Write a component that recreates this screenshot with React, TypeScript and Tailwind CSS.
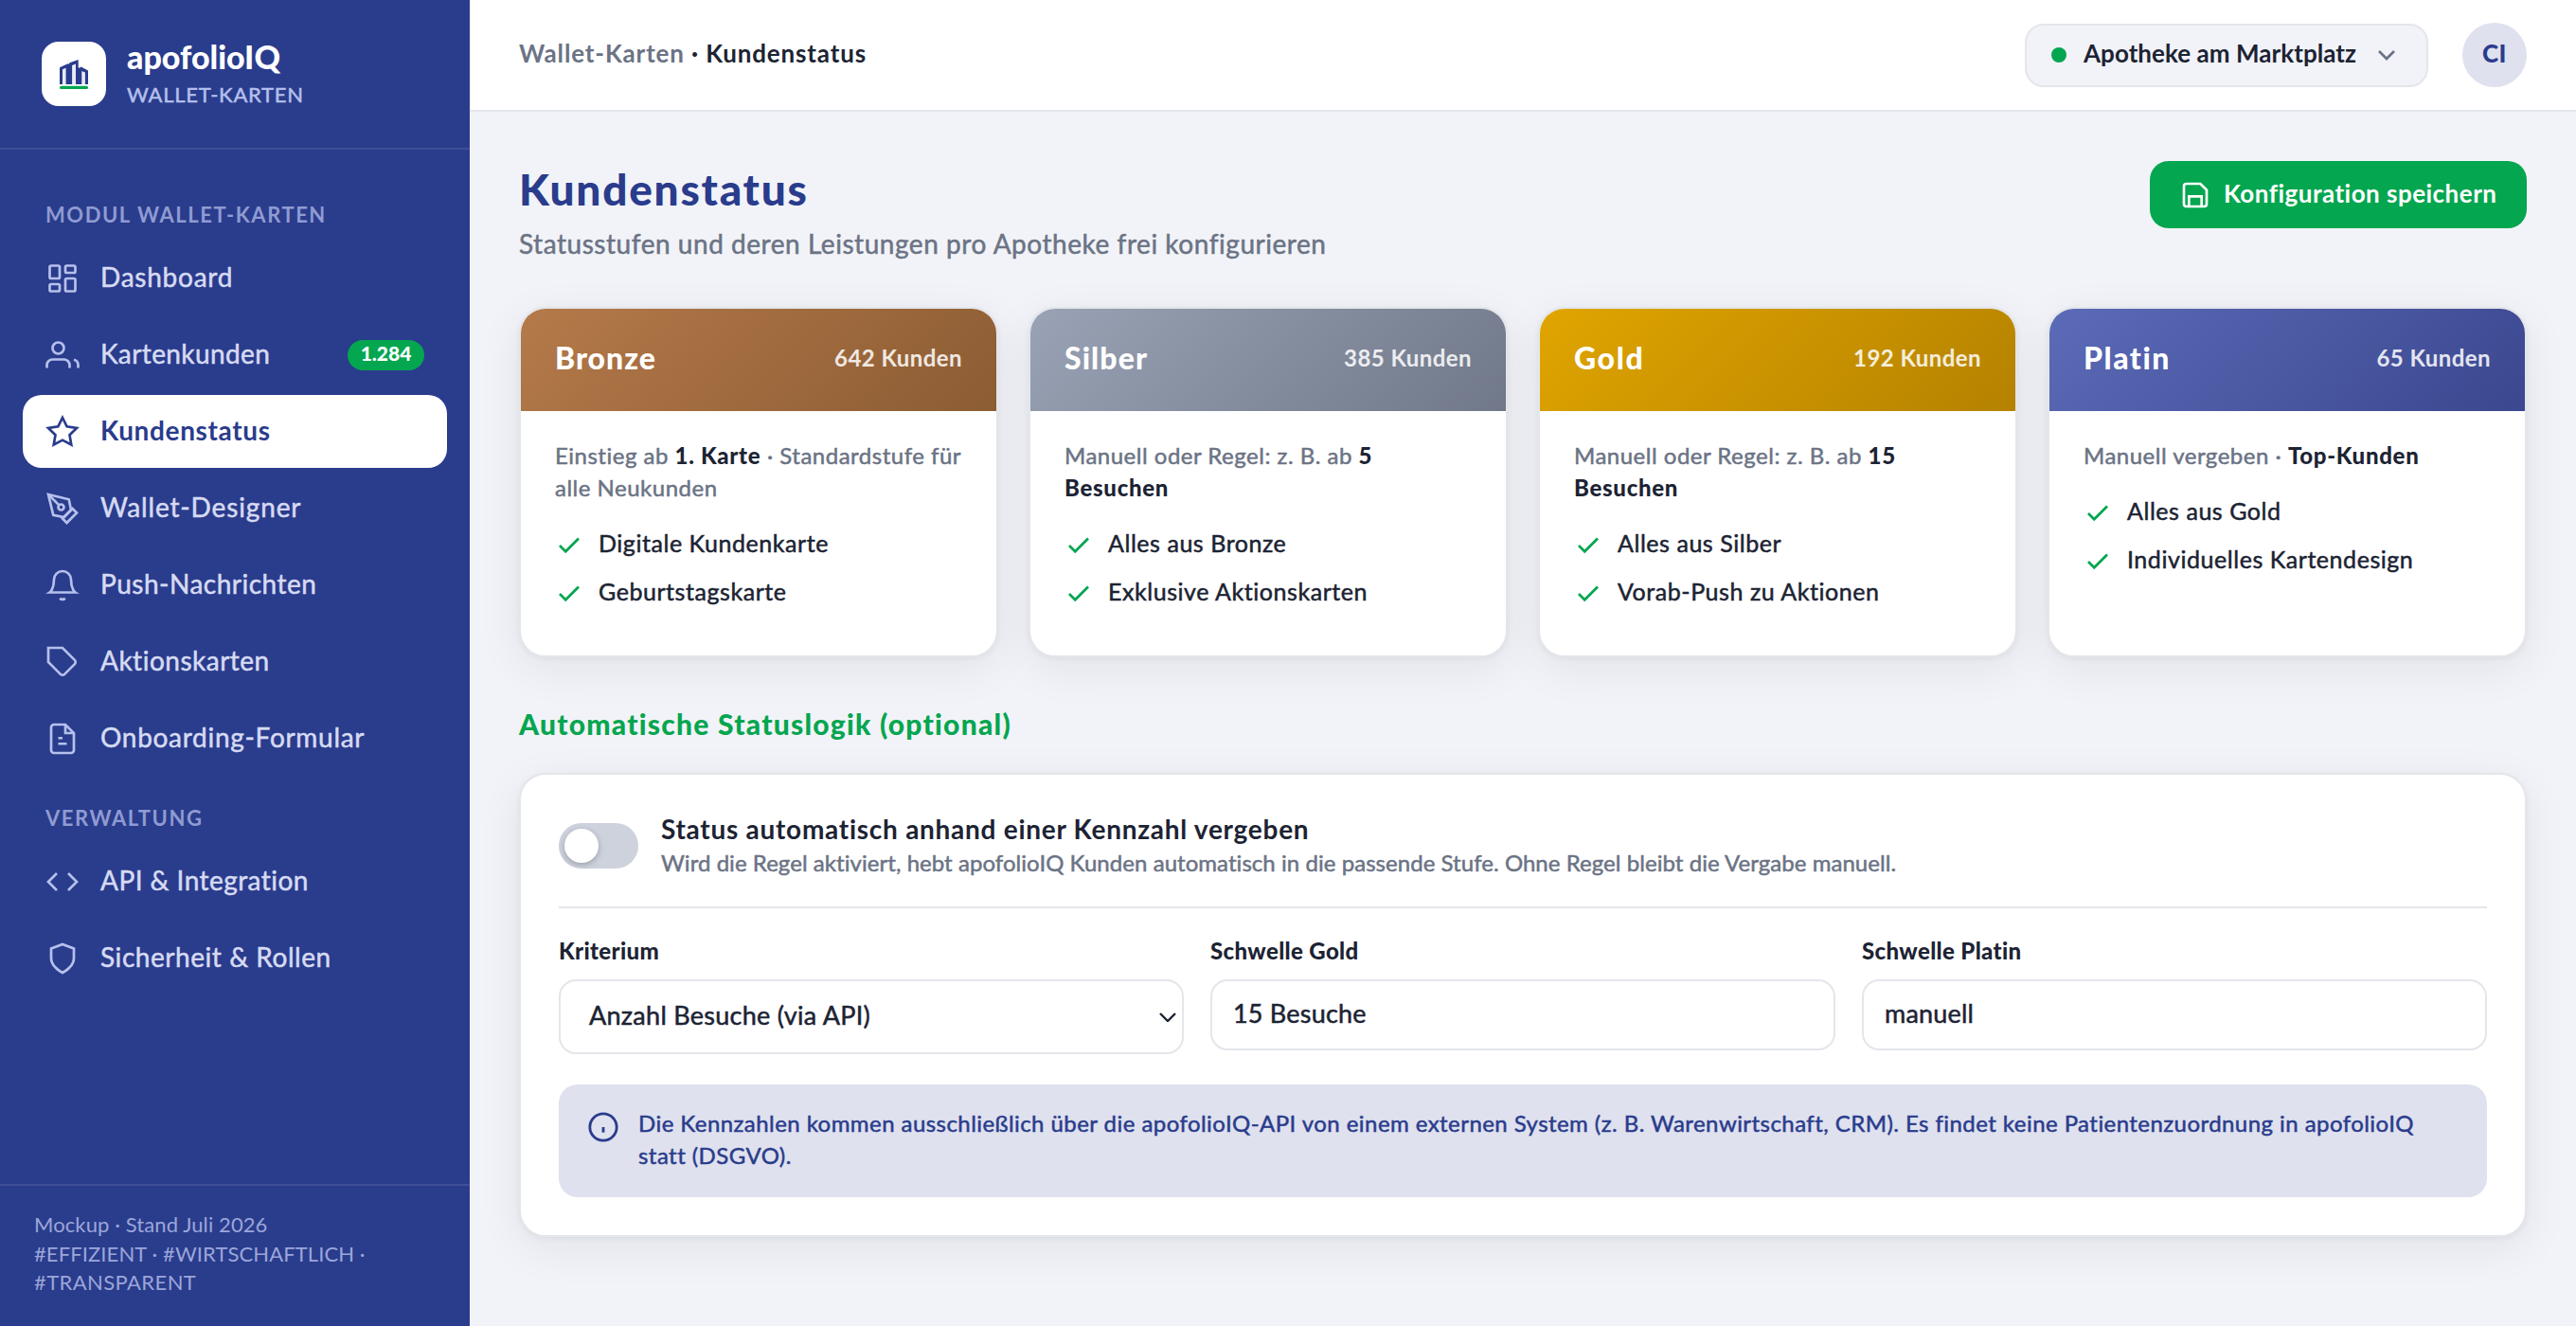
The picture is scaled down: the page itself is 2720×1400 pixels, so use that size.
import type { ReactNode } from "react";
import { clsx } from "clsx";

interface NavItem {
  label: string;
  icon: ReactNode;
  tracking: string;
  badge?: string;
  active?: boolean;
}

interface Tier {
  name: string;
  nameTracking: string;
  count: string;
  gradient: string;
  rule: ReactNode;
  perks: string[];
}

const icons = {
  dashboard: (
    <>
      <rect x="3" y="3" width="7" height="9" rx="1" />
      <rect x="14" y="3" width="7" height="5" rx="1" />
      <rect x="14" y="12" width="7" height="9" rx="1" />
      <rect x="3" y="16" width="7" height="5" rx="1" />
    </>
  ),
  users: (
    <>
      <path d="M17 21v-2a4 4 0 0 0-4-4H5a4 4 0 0 0-4 4v2" />
      <circle cx="9" cy="7" r="4" />
      <path d="M23 21v-2a4 4 0 0 0-3-3.87" />
    </>
  ),
  star: (
    <polygon points="12 2 15.09 8.26 22 9.27 17 14.14 18.18 21.02 12 17.77 5.82 21.02 7 14.14 2 9.27 8.91 8.26" />
  ),
  pen: (
    <>
      <path d="M12 19l7-7 3 3-7 7-3-3z" />
      <path d="M18 13l-1.5-7.5L2 2l3.5 14.5L13 18l5-5z" />
      <path d="M2 2l7.586 7.586" />
      <circle cx="11" cy="11" r="2" />
    </>
  ),
  bell: (
    <>
      <path d="M18 8A6 6 0 0 0 6 8c0 7-3 9-3 9h18s-3-2-3-9" />
      <path d="M13.73 21a2 2 0 0 1-3.46 0" />
    </>
  ),
  tag: (
    <path d="M20.59 13.41l-7.17 7.17a2 2 0 0 1-2.83 0L2 12V2h10l8.59 8.59a2 2 0 0 1 0 2.82z" />
  ),
  file: (
    <>
      <path d="M14 2H6a2 2 0 0 0-2 2v16a2 2 0 0 0 2 2h12a2 2 0 0 0 2-2V8z" />
      <path d="M14 2v6h6M9 11.5h3M9 15.5h6" />
    </>
  ),
  code: <path d="M16 18l6-6-6-6M8 6l-6 6 6 6" />,
  shield: <path d="M12 22s8-4 8-10V5l-8-3-8 3v7c0 6 8 10 8 10z" />,
  save: (
    <>
      <path d="M19 21H5a2 2 0 0 1-2-2V5a2 2 0 0 1 2-2h11l5 5v11a2 2 0 0 1-2 2z" />
      <path d="M17 21v-8H7v8" />
    </>
  ),
  check: <path d="M20 6L9 17l-5-5" />,
  chevron: <path d="M6 9l6 6 6-6" />,
  info: (
    <>
      <circle cx="12" cy="12" r="10" />
      <path d="M12 16v-4" />
    </>
  ),
};

const modulItems: NavItem[] = [
  { label: "Dashboard", icon: icons.dashboard, tracking: "tracking-[0.75px]" },
  {
    label: "Kartenkunden",
    icon: icons.users,
    tracking: "tracking-[0.4px]",
    badge: "1.284",
  },
  {
    label: "Kundenstatus",
    icon: icons.star,
    tracking: "tracking-[0.65px]",
    active: true,
  },
  { label: "Wallet-Designer", icon: icons.pen, tracking: "tracking-[0.85px]" },
  { label: "Push-Nachrichten", icon: icons.bell, tracking: "tracking-[0.5px]" },
  { label: "Aktionskarten", icon: icons.tag, tracking: "tracking-[0.5px]" },
  { label: "Onboarding-Formular", icon: icons.file, tracking: "tracking-[0.7px]" },
];

const verwaltungItems: NavItem[] = [
  { label: "API & Integration", icon: icons.code, tracking: "tracking-[0.45px]" },
  { label: "Sicherheit & Rollen", icon: icons.shield, tracking: "tracking-[0.55px]" },
];

const tiers: Tier[] = [
  {
    name: "Bronze",
    nameTracking: "tracking-[1px]",
    count: "642 Kunden",
    gradient: "from-[#b57a4a] to-[#8c5c33]",
    rule: (
      <>
        Einstieg ab <Strong>1. Karte</Strong> · Standardstufe für alle Neukunden
      </>
    ),
    perks: ["Digitale Kundenkarte", "Geburtstagskarte"],
  },
  {
    name: "Silber",
    nameTracking: "tracking-[1.1px]",
    count: "385 Kunden",
    gradient: "from-[#9aa3b5] to-[#707889]",
    rule: (
      <>
        Manuell oder Regel: z. B. ab <Strong>5 Besuchen</Strong>
      </>
    ),
    perks: ["Alles aus Bronze", "Exklusive Aktionskarten"],
  },
  {
    name: "Gold",
    nameTracking: "tracking-[1.6px]",
    count: "192 Kunden",
    gradient: "from-[#e0a500] to-[#b58200]",
    rule: (
      <>
        Manuell oder Regel: z. B. ab <Strong>15 Besuchen</Strong>
      </>
    ),
    perks: ["Alles aus Silber", "Vorab-Push zu Aktionen"],
  },
  {
    name: "Platin",
    nameTracking: "tracking-[1.5px]",
    count: "65 Kunden",
    gradient: "from-[#5c6bb8] to-[#3b478f]",
    rule: (
      <>
        Manuell vergeben · <Strong>Top-Kunden</Strong>
      </>
    ),
    perks: ["Alles aus Gold", "Individuelles Kartendesign"],
  },
];

function Strong({ children }: { children: ReactNode }) {
  return (
    <b className="font-black tracking-[0.7px] text-[#1c2333] [-webkit-text-stroke:0]">
      {children}
    </b>
  );
}

function Icon({
  children,
  className,
  width = 1.8,
}: {
  children: ReactNode;
  className?: string;
  width?: number;
}) {
  return (
    <svg
      viewBox="0 0 24 24"
      fill="none"
      stroke="currentColor"
      strokeWidth={width}
      className={clsx("shrink-0", className)}
    >
      {children}
    </svg>
  );
}

function Logo() {
  return (
    <div className="flex size-[68px] shrink-0 items-center justify-center rounded-[18px] bg-white">
      <svg viewBox="0 0 30 31" className="h-[31px] w-[30px]">
        <path
          fill="#2a3c8c"
          d="M0 26V8.2l8.6-4 1 .6 1-1.6L19.7 0v8.2l1.3.6 1.6-1.2 7.4 4V26z"
        />
        <path
          fill="#e9ebf6"
          d="M3 10.3l3.6-1.6V26H3zM13.1 5.9l3.9-1.4V26h-3.9zM23.3 11.9l3.6 1.6V26h-3.6z"
        />
        <rect y="27.7" width="30" height="3.3" rx="1.6" fill="#04a64f" />
      </svg>
    </div>
  );
}

function NavLabel({ children }: { children: ReactNode }) {
  return (
    <div className="px-6 text-[22px] leading-[30px] font-bold tracking-[1.55px] text-[#8f9bd2] [-webkit-text-stroke:0]">
      {children}
    </div>
  );
}

function NavList({ items }: { items: NavItem[] }) {
  return (
    <nav className="mt-[13px] flex flex-col gap-1">
      {items.map((item) => (
        <a
          key={item.label}
          className={clsx(
            "flex h-[77px] items-center gap-[22px] rounded-[20px] px-6",
            item.active ? "bg-white text-[#2a3c8c]" : "text-[#d6dbf3]"
          )}
        >
          <Icon
            className={clsx("size-9", item.active ? "text-[#2a3c8c]" : "text-[#b5c0ec]")}
          >
            {item.icon}
          </Icon>
          <span
            className={clsx(
              "pb-[3px] text-[28px] leading-9",
              item.active && "font-bold [-webkit-text-stroke:0]",
              item.tracking
            )}
          >
            {item.label}
          </span>
          {item.badge && (
            <span className="ml-auto w-[81px] rounded-full bg-[#04a64f] pb-1 text-center text-[21px] leading-7 font-black text-white [-webkit-text-stroke:0]">
              {item.badge}
            </span>
          )}
        </a>
      ))}
    </nav>
  );
}

function Sidebar() {
  return (
    <aside className="flex w-[496px] shrink-0 flex-col bg-[#2a3c8c]">
      <div className="flex h-[158px] items-center gap-[22px] border-b-2 border-[#3f4f97] px-11">
        <Logo />
        <div className="flex flex-col gap-1.5">
          <div className="text-[34px] leading-[38px] font-black text-white [-webkit-text-stroke:0]">
            apofolioIQ
          </div>
          <div className="text-[22px] leading-[30px] tracking-[0.75px] text-[#b5c0ec]">
            WALLET-KARTEN
          </div>
        </div>
      </div>

      <div className="flex-1 px-6 pt-[54px]">
        <NavLabel>MODUL WALLET-KARTEN</NavLabel>
        <NavList items={modulItems} />
        <div className="mt-[31px]">
          <NavLabel>VERWALTUNG</NavLabel>
          <NavList items={verwaltungItems} />
        </div>
      </div>

      <div className="border-t-2 border-[#3f4f97] px-9 pt-[26px] pb-[30px] text-[22px] leading-[30.6px] tracking-[0.1px] text-[#9ba6da] [-webkit-text-stroke:0]">
        Mockup · Stand Juli 2026
        <br />
        #EFFIZIENT · #WIRTSCHAFTLICH ·
        <br />
        <span className="tracking-[0.4px]">#TRANSPARENT</span>
      </div>
    </aside>
  );
}

function Topbar() {
  return (
    <header className="flex h-[118px] items-center border-b-2 border-[#e3e6ea] bg-white px-[52px]">
      <div className="pb-[3px] text-[26px] font-bold tracking-[0.85px] text-[#1c2333] [-webkit-text-stroke:0]">
        <span className="text-[#6b7385]">Wallet-Karten</span> · Kundenstatus
      </div>
      <div className="ml-auto flex items-center gap-9">
        <div className="flex h-[67px] w-[426px] items-center rounded-[20px] border-2 border-[#e3e6ea] bg-[#f2f3f8] px-[26px]">
          <span className="size-4 rounded-full bg-[#04a64f]" />
          <span className="ml-[18px] pb-[3px] text-[26px] font-bold tracking-[0.05px] text-[#1c2333] [-webkit-text-stroke:0]">
            Apotheke am Marktplatz
          </span>
          <Icon className="ml-auto size-8 text-[#6b7385]" width={2}>
            {icons.chevron}
          </Icon>
        </div>
        <div className="flex size-[68px] items-center justify-center rounded-full bg-[#dfe1ee] pb-[3px] text-[26px] font-black tracking-[0.5px] text-[#2a3c8c] [-webkit-text-stroke:0]">
          CI
        </div>
      </div>
    </header>
  );
}

function TierCard({ tier }: { tier: Tier }) {
  return (
    <div className="overflow-hidden rounded-[28px] border-2 border-[#e3e6ea] bg-white shadow-[0_2px_6px_rgba(16,24,40,0.05),0_12px_48px_rgba(16,24,40,0.07)]">
      <div
        className={clsx(
          "flex h-[108px] items-center justify-between bg-linear-135 px-9 pb-1",
          tier.gradient
        )}
      >
        <span
          className={clsx(
            "text-[32px] font-black text-white [-webkit-text-stroke:0]",
            tier.nameTracking
          )}
        >
          {tier.name}
        </span>
        <span className="text-[24px] font-bold tracking-[0.45px] text-white/85 [-webkit-text-stroke:0]">
          {tier.count}
        </span>
      </div>
      <div className="px-9 pt-[30px] pb-12">
        <p className="text-[24px] leading-[34px] tracking-[0.5px] text-[#6b7385]">
          {tier.rule}
        </p>
        <ul className="mt-[26px] flex flex-col gap-4 text-[25px] text-[#1c2333]">
          {tier.perks.map((perk) => (
            <li key={perk} className="flex items-center gap-4">
              <Icon className="size-[30px] text-[#04a64f]" width={2.2}>
                {icons.check}
              </Icon>
              <span className="pb-[5px] leading-[30px] tracking-[0.55px]">{perk}</span>
            </li>
          ))}
        </ul>
      </div>
    </div>
  );
}

function Field({ label, children }: { label: string; children: ReactNode }) {
  return (
    <div className="flex flex-col items-stretch">
      <span className="text-[24px] leading-8 font-black tracking-[0.35px] text-[#1c2333] [-webkit-text-stroke:0]">
        {label}
      </span>
      <div className="mt-3.5 text-[27px] text-[#1c2333]">{children}</div>
    </div>
  );
}

function TextBox({ value }: { value: string }) {
  return (
    <div className="flex h-[75px] items-center rounded-[18px] border-2 border-[#e3e6ea] bg-white px-[22px] pb-[3px] tracking-[0.2px]">
      {value}
    </div>
  );
}

function StatusLogic() {
  return (
    <section className="mt-8 rounded-[28px] border-2 border-[#e3e6ea] bg-white px-10 pt-[39px] pb-10 shadow-[0_2px_6px_rgba(16,24,40,0.05),0_12px_48px_rgba(16,24,40,0.07)]">
      <div className="flex items-center gap-6 border-b-2 border-[#e3e6ea] pb-[29px]">
        <div className="flex h-12 w-[84px] items-center rounded-full bg-[#cdd2dd] px-1.5">
          <span className="size-9 rounded-full bg-white shadow-[0_2px_6px_rgba(0,0,0,0.25)]" />
        </div>
        <div>
          <div className="text-[28px] leading-9 font-bold tracking-[0.73px] text-[#1c2333] [-webkit-text-stroke:0]">
            Status automatisch anhand einer Kennzahl vergeben
          </div>
          <div className="text-[24px] leading-[35px] tracking-[0.05px] text-[#6b7385]">
            Wird die Regel aktiviert, hebt apofolioIQ Kunden automatisch in die
            passende Stufe. Ohne Regel bleibt die Vergabe manuell.
          </div>
        </div>
      </div>

      <div className="mt-[29px] grid grid-cols-3 gap-7">
        <Field label="Kriterium">
          <div className="flex h-[79px] items-center justify-between rounded-[18px] border-2 border-[#e3e6ea] bg-white pr-1.5 pl-[30px]">
            <span className="pb-[3px] tracking-[0.28px]">Anzahl Besuche (via API)</span>
            <svg
              viewBox="0 0 18 10"
              fill="none"
              stroke="currentColor"
              strokeWidth="2.4"
              className="h-2.5 w-[18px]"
            >
              <path d="M1 1l8 8 8-8" />
            </svg>
          </div>
        </Field>
        <Field label="Schwelle Gold">
          <TextBox value="15 Besuche" />
        </Field>
        <Field label="Schwelle Platin">
          <TextBox value="manuell" />
        </Field>
      </div>

      <div className="mt-8 flex items-start gap-5 rounded-[20px] bg-[#dfe1ee] px-[30px] pt-6 pb-[27px] text-[#2a3c8c]">
        <Icon className="mt-1 size-[34px]" width={2}>
          {icons.info}
        </Icon>
        <p className="text-[24px] leading-[34px] tracking-[0.44px]">
          Die Kennzahlen kommen ausschließlich über die apofolioIQ-API von einem
          externen System (z. B. Warenwirtschaft, CRM). Es findet keine
          Patientenzuordnung in apofolioIQ statt (DSGVO).
        </p>
      </div>
    </section>
  );
}

export default function App() {
  return (
    <div className="flex h-[1400px] w-[2720px] overflow-hidden bg-[#f2f3f8] font-['Lato','Open_Sans',sans-serif] [-webkit-text-stroke:0.5px]">
      <Sidebar />
      <div className="flex min-w-0 flex-1 flex-col">
        <Topbar />
        <main className="px-[52px] pt-[52px]">
          <div className="flex items-start justify-between">
            <div>
              <h1 className="pt-px text-[46px] leading-[58px] font-black tracking-[1.75px] text-[#2a3c8c] [-webkit-text-stroke:0]">
                Kundenstatus
              </h1>
              <p className="mt-[9px] text-[28px] leading-[38px] tracking-[0.54px] text-[#6b7385]">
                Statusstufen und deren Leistungen pro Apotheke frei konfigurieren
              </p>
            </div>
            <button className="flex h-[71px] w-[398px] items-center gap-3.5 rounded-[20px] bg-[#04a64f] pl-8 text-white">
              <Icon className="size-8" width={2}>
                {icons.save}
              </Icon>
              <span className="pb-[3px] text-[26px] font-bold tracking-[0.48px] whitespace-nowrap [-webkit-text-stroke:0]">
                Konfiguration speichern
              </span>
            </button>
          </div>

          <div className="mt-12 grid grid-cols-4 gap-8">
            {tiers.map((tier) => (
              <TierCard key={tier.name} tier={tier} />
            ))}
          </div>

          <h2 className="mt-[50px] text-[30px] leading-10 font-black tracking-[1.25px] text-[#04a64f] [-webkit-text-stroke:0]">
            Automatische Statuslogik (optional)
          </h2>
          <StatusLogic />
        </main>
      </div>
    </div>
  );
}
